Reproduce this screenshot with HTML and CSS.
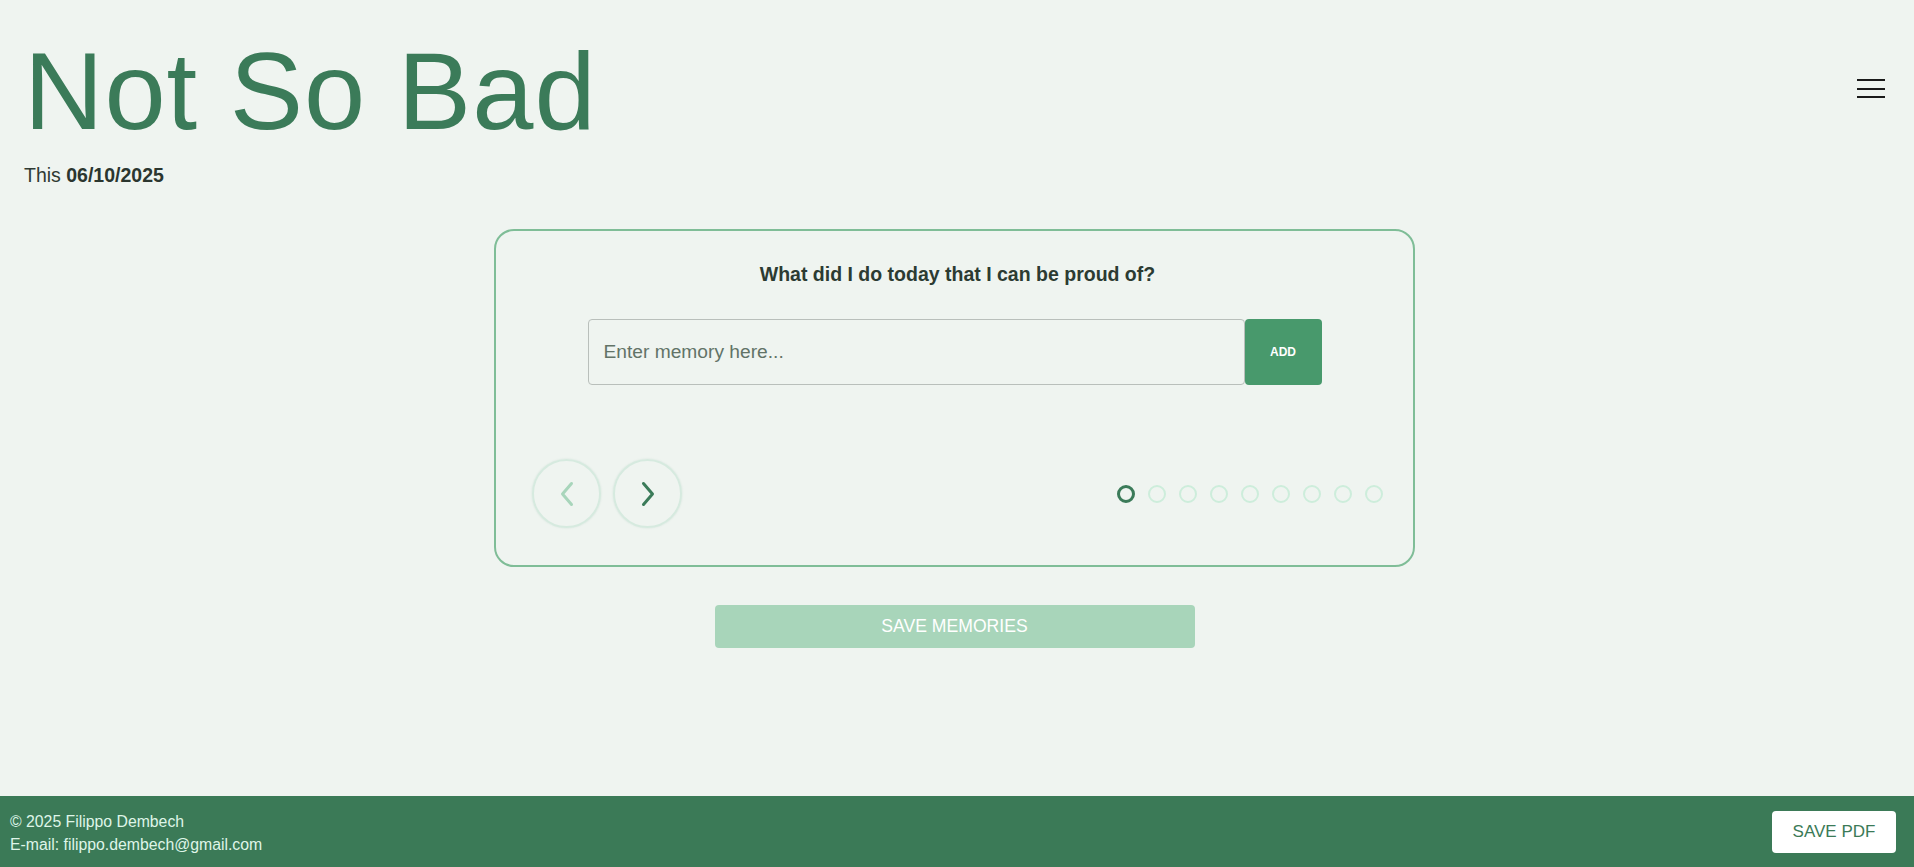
FILE: index.html
```html
<!DOCTYPE html>
<html lang="en">
<head>
<meta charset="utf-8">
<title>Not So Bad</title>
<link rel="stylesheet" href="styles.css">
</head>
<body>
<header class="header">
  <div class="brand">
    <h1 class="title">Not So Bad</h1>
    <div class="date">This <strong>06/10/2025</strong></div>
  </div>
  <button class="menu" aria-label="Menu"><span></span><span></span><span></span></button>
</header>
<main class="main">
  <section class="card">
    <h2 class="question">What did I do today that I can be proud of?</h2>
    <div class="entry">
      <input class="entry-input" type="text" placeholder="Enter memory here...">
      <button class="entry-add">ADD</button>
    </div>
    <div class="nav">
      <div class="arrows">
        <button class="arrow arrow-prev" aria-label="Previous">
          <svg width="18" height="28" viewBox="0 0 18 28"><path d="M13.5 3.5 L4.5 14 L13.5 24.5" fill="none" stroke="currentColor" stroke-width="3" stroke-linecap="round" stroke-linejoin="round"/></svg>
        </button>
        <button class="arrow arrow-next" aria-label="Next">
          <svg width="18" height="28" viewBox="0 0 18 28"><path d="M4.5 3.5 L13.5 14 L4.5 24.5" fill="none" stroke="currentColor" stroke-width="3" stroke-linecap="round" stroke-linejoin="round"/></svg>
        </button>
      </div>
      <div class="dots">
        <span class="dot dot-active"></span><span class="dot"></span><span class="dot"></span><span class="dot"></span><span class="dot"></span><span class="dot"></span><span class="dot"></span><span class="dot"></span><span class="dot"></span>
      </div>
    </div>
  </section>
  <button class="save">SAVE MEMORIES</button>
</main>
<footer class="footer">
  <div class="footer-info">
    <div>© 2025 Filippo Dembech</div>
    <div>E-mail: filippo.dembech@gmail.com</div>
  </div>
  <button class="pdf">SAVE PDF</button>
</footer>
</body>
</html>
```
FILE: styles.css
```css
* { box-sizing: border-box; }
html, body { margin: 0; padding: 0; }
body {
  background: #eff4f0;
  font-family: "Liberation Sans", Arial, sans-serif;
  color: #2f3a33;
  min-height: 100vh;
  display: flex;
  flex-direction: column;
}
.header {
  display: flex;
  justify-content: space-between;
  align-items: flex-start;
  padding: 36px 29px 0 24px;
}
.title {
  margin: 0;
  font-size: 110px;
  line-height: 110px;
  font-weight: 400;
  letter-spacing: 1px;
  color: #3b7b59;
}
.date {
  margin-top: 17px;
  font-size: 19.5px;
  line-height: 24px;
  color: #2f3a33;
}
.date strong { color: #2b362f; }
.menu {
  margin-top: 43px;
  background: none;
  border: 0;
  padding: 0;
  width: 28px;
  display: flex;
  flex-direction: column;
  gap: 6.5px;
  cursor: pointer;
}
.menu span {
  display: block;
  height: 2px;
  width: 28px;
  background: #1a1a1a;
}
.main {
  flex: 1;
  display: flex;
  flex-direction: column;
  align-items: center;
  padding: 42px 5px 0 0;
}
.card {
  width: 921px;
  border: 2px solid #7fbd97;
  border-radius: 20px;
  padding: 32px 30px 37px 36px;
}
.question {
  margin: 0;
  text-align: center;
  font-size: 19.5px;
  line-height: 22px;
  font-weight: 700;
  color: #2c3b32;
}
.entry {
  display: flex;
  justify-content: center;
  margin-top: 34px;
  padding-right: 6px;
}
.entry-input {
  width: 657px;
  height: 66px;
  border: 1px solid #b9bfbb;
  border-radius: 4px;
  background: transparent;
  padding: 0 15px;
  font-family: "Liberation Sans", Arial, sans-serif;
  font-size: 19.2px;
  color: #2f3a33;
  outline: none;
}
.entry-input::placeholder { color: #627367; }
.entry-add {
  width: 77px;
  height: 66px;
  border: 0;
  border-radius: 4px;
  background: #48996c;
  color: #fff;
  font-family: "Liberation Sans", Arial, sans-serif;
  font-size: 12px;
  font-weight: 700;
}
.nav {
  margin-top: 74px;
  display: flex;
  justify-content: space-between;
  align-items: center;
}
.arrows { display: flex; gap: 12px; }
.arrow {
  width: 69px;
  height: 69px;
  border-radius: 50%;
  border: 2px solid #d6eadf;
  background: transparent;
  box-shadow: 0 0 2px rgba(120, 180, 150, 0.25);
  display: flex;
  align-items: center;
  justify-content: center;
  padding: 0;
}
.arrow-prev { color: #a8d5bb; }
.arrow-next { color: #3b7b59; }
.dots { display: flex; gap: 13px; }
.dot {
  width: 18px;
  height: 18px;
  border-radius: 50%;
  border: 2.5px solid #cdeddb;
}
.dot-active { border: 3px solid #3b7b59; }
.save {
  margin-top: 38px;
  width: 480px;
  height: 43px;
  border: 0;
  border-radius: 4px;
  background: #a8d5ba;
  color: #fff;
  font-family: "Liberation Sans", Arial, sans-serif;
  font-size: 17.6px;
}
.footer {
  height: 71px;
  background: #3b7a57;
  display: flex;
  justify-content: space-between;
  align-items: center;
  padding: 0 18px 0 10px;
}
.footer-info {
  color: #dff5e8;
  font-size: 15.8px;
  line-height: 22.7px;
  padding-top: 5px;
}
.pdf {
  width: 124px;
  height: 42px;
  border: 0;
  border-radius: 4px;
  background: #fff;
  color: #3b7a57;
  font-family: "Liberation Sans", Arial, sans-serif;
  font-size: 17px;
}
```
